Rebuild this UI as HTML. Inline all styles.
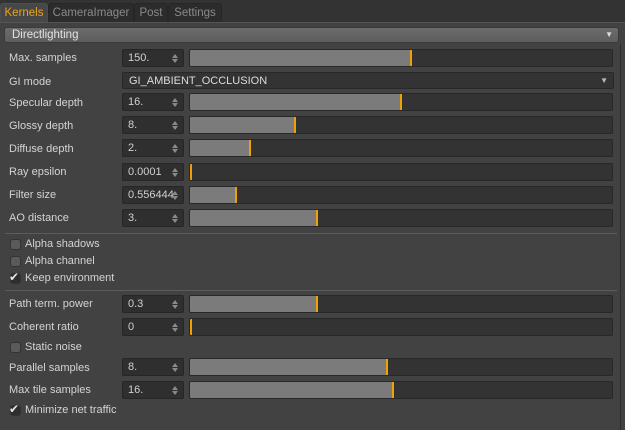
<!DOCTYPE html>
<html><head><style>
*{margin:0;padding:0;box-sizing:border-box}
body{width:625px;height:430px;background:#424242;position:relative;overflow:hidden;font-family:"Liberation Sans","DejaVu Sans",sans-serif;font-size:11px;color:#d6d6d6}
.a{position:absolute}
.tabbar{left:0;top:0;width:625px;height:22px;background:#333}
.tab{position:absolute;top:3px;height:19px;background:#2c2c2c;color:#8a8a8a;font-size:11.5px;line-height:19px;text-align:center;border-radius:3px 3px 0 0;border:1px solid #262626;border-bottom:none}
.lbl{position:absolute;left:9px;font-size:11px;color:#d4d4d4;margin-top:2px}
.num{position:absolute;left:122px;width:62px;height:18px;background:#2f2f2f;border:1px solid #262626;border-radius:2px;padding-left:5px;line-height:17px;color:#d0d0d0;font-size:11px}
.num:before,.num:after{content:"";position:absolute;right:5px;width:0;height:0;border-left:3px solid transparent;border-right:3px solid transparent}
.num:before{top:4px;border-bottom:4px solid #8a8a8a}
.num:after{top:9px;border-top:4px solid #8a8a8a}
.sl{position:absolute;left:189px;width:424px;height:18px;background:#333;border:1px solid #282828;border-radius:2px;overflow:hidden}
.sl b{position:absolute;left:0;top:0;bottom:0;background:#7b7b7b}
.sl s{position:absolute;top:0;bottom:0;width:2px;background:#f0a000}
.cb{position:absolute;left:10px;width:11px;height:11px;border-radius:3px;background:#5a5a5a;border:1px solid #333}
.ck{position:absolute;left:9px;font-size:12px;color:#e6e6e6;font-weight:bold}
.sep{position:absolute;left:5px;width:612px;height:1px;background:#5c5c5c}
</style></head><body>
<div class="a tabbar"></div>
<div class="tab" style="left:0;width:48px;background:#474747;color:#e8a31c;border-color:#4e4e4e">Kernels</div>
<div class="tab" style="left:48px;width:86px">CameraImager</div>
<div class="tab" style="left:134px;width:34px">Post</div>
<div class="tab" style="left:168px;width:54px">Settings</div>
<div class="a" style="left:0;top:22px;width:625px;height:1px;background:#555"></div>
<div class="a" style="left:620px;top:44px;width:1px;height:386px;background:#2e2e2e"></div>
<div class="a" style="left:4px;top:27px;width:615px;height:16px;background:linear-gradient(#6c6c6c,#5e5e5e);border:1px solid #3a3a3a;border-radius:3px;padding-left:7px;line-height:14px;color:#e2e2e2;font-size:11.5px">Directlighting<span style="position:absolute;right:5px;top:0;font-size:8px;color:#ddd">▼</span></div>

<div class="lbl" style="top:50px">Max. samples</div>
<div class="num" style="top:49px">150.</div>
<div class="sl" style="top:49px"><b style="width:221px"></b><s style="left:220px"></s></div>

<div class="lbl" style="top:74px">GI mode</div>
<div class="a" style="left:122px;top:72px;width:492px;height:17px;background:#333;border:1px solid #282828;border-radius:2px;padding-left:6px;line-height:16px;font-size:11px;color:#dcdcdc">GI_AMBIENT_OCCLUSION<span style="position:absolute;right:5px;font-size:8px;color:#bbb">▼</span></div>

<div class="lbl" style="top:95px">Specular depth</div>
<div class="num" style="top:93px">16.</div>
<div class="sl" style="top:93px"><b style="width:211px"></b><s style="left:210px"></s></div>

<div class="lbl" style="top:118px">Glossy depth</div>
<div class="num" style="top:116px">8.</div>
<div class="sl" style="top:116px"><b style="width:105px"></b><s style="left:104px"></s></div>

<div class="lbl" style="top:141px">Diffuse depth</div>
<div class="num" style="top:139px">2.</div>
<div class="sl" style="top:139px"><b style="width:60px"></b><s style="left:59px"></s></div>

<div class="lbl" style="top:164px">Ray epsilon</div>
<div class="num" style="top:163px">0.0001</div>
<div class="sl" style="top:163px"><s style="left:0"></s></div>

<div class="lbl" style="top:187px">Filter size</div>
<div class="num" style="top:186px">0.556444</div>
<div class="sl" style="top:186px"><b style="width:46px"></b><s style="left:45px"></s></div>

<div class="lbl" style="top:210px">AO distance</div>
<div class="num" style="top:209px">3.</div>
<div class="sl" style="top:209px"><b style="width:127px"></b><s style="left:126px"></s></div>

<div class="sep" style="top:233px"></div>
<div class="cb" style="top:239px"></div><div class="lbl" style="left:25px;top:236px">Alpha shadows</div>
<div class="cb" style="top:256px"></div><div class="lbl" style="left:25px;top:253px">Alpha channel</div>
<div class="cb" style="top:273px;background:#2e2e2e"></div><div class="ck" style="top:270px">✔</div><div class="lbl" style="left:25px;top:270px">Keep environment</div>
<div class="sep" style="top:290px"></div>

<div class="lbl" style="top:296px">Path term. power</div>
<div class="num" style="top:295px">0.3</div>
<div class="sl" style="top:295px"><b style="width:127px"></b><s style="left:126px"></s></div>

<div class="lbl" style="top:319px">Coherent ratio</div>
<div class="num" style="top:318px">0</div>
<div class="sl" style="top:318px"><s style="left:0"></s></div>

<div class="cb" style="top:342px"></div><div class="lbl" style="left:25px;top:339px">Static noise</div>

<div class="lbl" style="top:360px">Parallel samples</div>
<div class="num" style="top:358px">8.</div>
<div class="sl" style="top:358px"><b style="width:197px"></b><s style="left:196px"></s></div>

<div class="lbl" style="top:382px">Max tile samples</div>
<div class="num" style="top:381px">16.</div>
<div class="sl" style="top:381px"><b style="width:203px"></b><s style="left:202px"></s></div>

<div class="cb" style="top:405px;background:#2e2e2e"></div><div class="ck" style="top:402px">✔</div><div class="lbl" style="left:25px;top:402px">Minimize net traffic</div>
</body></html>
